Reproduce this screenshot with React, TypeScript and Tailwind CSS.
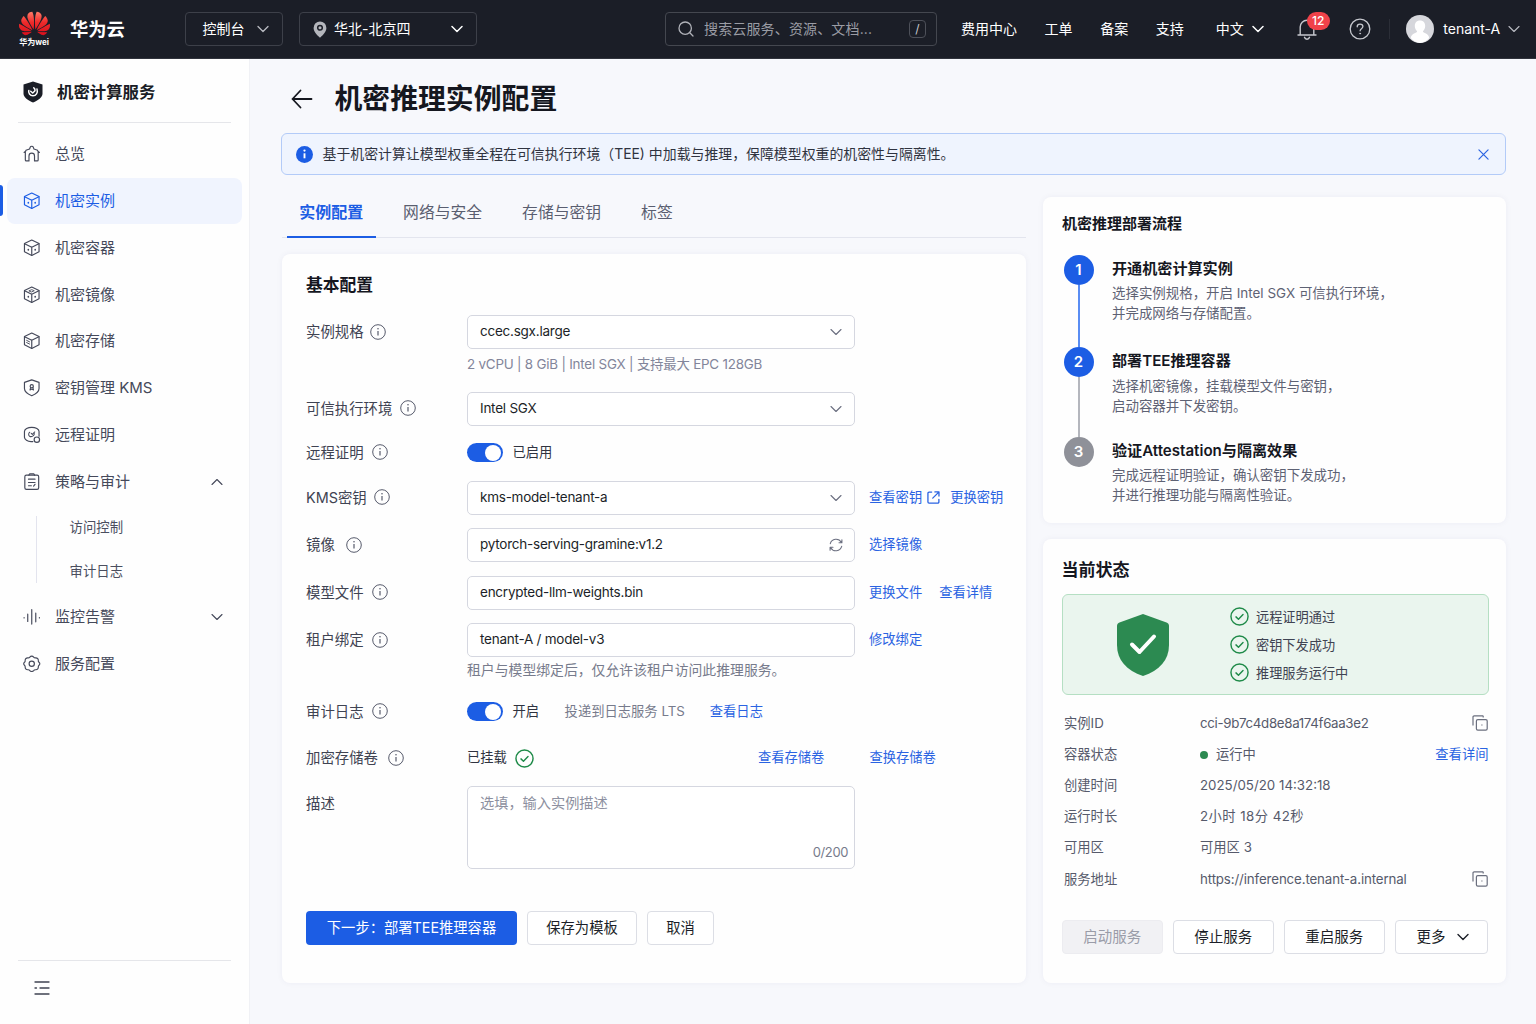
import type { ReactNode, SVGProps } from 'react'
import { SiHuawei } from 'react-icons/si'

type IconProps = SVGProps<SVGSVGElement>

function Icon({ children, ...props }: IconProps) {
  return (
    <svg
      viewBox="0 0 24 24"
      fill="none"
      stroke="currentColor"
      strokeWidth="1.6"
      strokeLinecap="round"
      strokeLinejoin="round"
      {...props}
    >
      {children}
    </svg>
  )
}

function Chevron({ up, className, strokeWidth = 1.3 }: { up?: boolean; className?: string; strokeWidth?: number }) {
  return (
    <svg
      viewBox="0 0 12 8"
      className={`w-3 h-2 shrink-0 ${className ?? ''}`}
      fill="none"
      stroke="currentColor"
      strokeWidth={strokeWidth}
      strokeLinecap="round"
      strokeLinejoin="round"
    >
      <path d={up ? 'M1 6.5 6 1.5l5 5' : 'M1 1.5l5 5 5-5'} />
    </svg>
  )
}

function HomeIcon(props: IconProps) {
  return (
    <Icon {...props}>
      <path d="M1.500 10.200 4 8V7.200l5-1.700.8-2.300a2.400 2.400 0 0 1 4.400 0l.8 2.300 5 1.700V8l2.500 2.200M3.200 9v11.400c0 .8.500 1.400 1.300 1.400h3.700v-6.800a3.800 3.800 0 0 1 7.600 0v6.800h3.700c.8 0 1.300-.6 1.300-1.400V9" />
    </Icon>
  )
}

function CubeIcon({ variant, ...props }: IconProps & { variant: 'dots' | 'top' | 'lines' }) {
  return (
    <Icon {...props}>
      <path d="M12 1.500 22 6.200v11.400L12 22.500 2 17.600V6.200z" />
      <path d="M2.200 6.400 12 11.200l9.800-4.800M12 11.200v11" />
      {variant !== 'lines' && <path d="M7.300 14.500v.6M16.700 14.500v.6" strokeWidth="2.200" />}
      {variant === 'top' && <path d="M8.500 6.500 12 5l3.500 1.500L12 8z" strokeWidth="1.200" />}
      {variant === 'lines' && <path d="M5 11.500l4 2M5 14.500l4 2" strokeWidth="1.300" />}
    </Icon>
  )
}

function KeyShieldIcon(props: IconProps) {
  return (
    <Icon {...props}>
      <path d="M12 1.200 22 4.600v8.400c0 4.600-4.500 7.600-10 10-5.500-2.400-10-5.400-10-10V4.600z" />
      <circle cx="12" cy="9.800" r="2.200" />
      <path d="M10.400 11.800 9.600 15l2.400-1.300 2.400 1.300-.8-3.200" strokeWidth="1.400" />
    </Icon>
  )
}

function AttestIcon(props: IconProps) {
  return (
    <Icon {...props}>
      <path d="M22 14V7.500C22 4.500 17.500 1.800 12 1.800S2 4.500 2 7.500v8c0 3 4.300 5.700 9 5.900h2.500" />
      <path d="M9.300 8.500c-2 1-2 4.300-.2 5.500 1.900 1.200 5.600.6 6.700-3.500M11.300 10l1.500 1.500 3.300-3.300" strokeWidth="1.400" />
      <circle cx="19" cy="18.800" r="3.700" />
    </Icon>
  )
}

function PolicyIcon(props: IconProps) {
  return (
    <Icon {...props}>
      <rect x="2.500" y="3" width="19" height="19.500" rx="2.200" />
      <path d="M8 3.200 9 1.300h6l1 1.900M7.500 8.500h9M7.500 13h9M7.500 17.500h4M14.500 18l2-2.500" />
    </Icon>
  )
}

function MonitorIcon(props: IconProps) {
  return (
    <Icon {...props}>
      <path d="M1.500 13v.6M6.500 8.500v10M12 2v20M17.500 7v12M22.500 13v.6" />
    </Icon>
  )
}

function GearIcon(props: IconProps) {
  return (
    <Icon {...props}>
      <path d="M9.400 2.800c1.400-1.700 3.800-1.700 5.200 0 .6.800 1.600 1.200 2.600 1.100 2.200-.3 3.900 1.400 3.800 3.500-.1 1 .2 1.900 1 2.600 1.400 1.200 1.400 2.900 0 4.100-.8.700-1.100 1.600-1 2.600.1 2.100-1.600 3.800-3.800 3.500-1-.1-2 .3-2.600 1.100-1.400 1.700-3.800 1.700-5.200 0-.6-.8-1.600-1.200-2.600-1.100-2.200.3-3.900-1.400-3.800-3.500.1-1-.2-1.900-1-2.600-1.400-1.200-1.400-2.900 0-4.100.8-.7 1.100-1.600 1-2.600C2.900 5.300 4.600 3.600 6.800 3.900c1 .1 2-.3 2.600-1.100z" />
      <circle cx="12" cy="12" r="3.600" />
    </Icon>
  )
}

function InfoIcon() {
  return (
    <svg viewBox="0 0 16 16" className="w-4 h-4 shrink-0 text-[#565a6b]" fill="none" stroke="currentColor" strokeWidth="1">
      <circle cx="8" cy="8" r="7.300" />
      <path d="M8 7v4.600" strokeWidth="1.200" />
      <circle cx="8" cy="4.700" r=".8" fill="currentColor" stroke="none" />
    </svg>
  )
}

function CheckCircle({ className }: { className?: string }) {
  return (
    <svg viewBox="0 0 20 20" className={`shrink-0 ${className ?? ''}`} fill="none" stroke="#1e8a48" strokeWidth="1.500" strokeLinecap="round" strokeLinejoin="round">
      <circle cx="10" cy="10" r="9" />
      <path d="m6.300 10.400 2.600 2.400 4.800-5" />
    </svg>
  )
}

function CopyIcon() {
  return (
    <svg viewBox="0 0 16 16" className="mr-px mb-px w-4 h-4" fill="none" stroke="#6b6f7e" strokeWidth="1.200" strokeLinejoin="round">
      <path d="M1 10.500V2a1.200 1.200 0 0 1 1.200-1.200h9M11.200.8v1.700" />
      <rect x="4.400" y="4.600" width="10.800" height="10.600" rx="1.400" />
      <path d="M9.300 10h1.200" />
    </svg>
  )
}

function Switch() {
  return (
    <div className="flex h-[19px] w-[35.500px] items-center justify-end rounded-full bg-[#1c5de4] p-[1.500px]">
      <div className="size-4 rounded-full bg-white" />
    </div>
  )
}

function Header() {
  return (
    <header className="flex h-[59px] shrink-0 items-center bg-[#1b1e27] text-sm text-white border-b border-[#30333c]">
      <div className="ml-[18px] flex w-8 flex-col items-center">
        <svg width="0" height="0" className="absolute">
          <defs>
            <linearGradient id="petal" x1="0" y1="0" x2="0" y2="1">
              <stop offset="0" stopColor="#ff7a66" />
              <stop offset=".45" stopColor="#ee2b2b" />
              <stop offset="1" stopColor="#d80f1c" />
            </linearGradient>
          </defs>
        </svg>
        <div className="flex h-[25px] items-center overflow-hidden">
          <SiHuawei className="size-[31px] shrink-0" fill="url(#petal)" />
        </div>
        <span className="pt-px text-[8px] font-bold leading-[10px] whitespace-nowrap">华为wei</span>
      </div>
      <span className="ml-5 w-[115px] pt-px text-[18.300px] font-semibold">华为云</span>
      <button className="flex h-[34px] w-[98px] items-center rounded border border-[#3d4049] pl-[16.500px]">
        控制台
        <Chevron className="ml-3 text-[#b9bbc2]" />
      </button>
      <button className="ml-4 flex h-[34px] w-[178px] items-center rounded border border-[#3d4049] pl-[13px] pr-[13.500px]">
        <svg viewBox="0 0 14 17" className="mr-[7px] h-[17px] w-3.5">
          <path d="M7 .5a6.400 6.400 0 0 1 6.400 6.400c0 3.600-3 6.600-6.400 9.800C3.600 13.500.6 10.500.6 6.900A6.400 6.400 0 0 1 7 .5z" fill="#b4b6bc" />
          <circle cx="7" cy="6.800" r="2.300" fill="#b4b6bc" stroke="#1b1e27" strokeWidth="1.500" />
        </svg>
        华北-北京四
        <Chevron className="ml-auto" strokeWidth={1.5} />
      </button>
      <div className="ml-[188px] flex h-[34px] w-[272px] items-center rounded border border-[#44474f] pl-3 pr-2.5 text-[#9a9ca4]">
        <svg viewBox="0 0 16 16" className="mr-[10px] size-4" fill="none" stroke="#b0b2b9" strokeWidth="1.300" strokeLinecap="round">
          <circle cx="7.200" cy="7.200" r="6.200" />
          <path d="m11.800 11.800 3.200 3.200" />
        </svg>
        <span className="tracking-[0.150px]">搜索云服务、资源、文档...</span>
        <span className="ml-auto flex h-[18px] w-[17px] items-center justify-center rounded border border-[#4d5059] text-xs text-[#c9cad0]">/</span>
      </div>
      <nav className="ml-6 flex gap-[27.600px]">
        <a>费用中心</a>
        <a>工单</a>
        <a>备案</a>
        <a>支持</a>
      </nav>
      <span className="ml-8">中文</span>
      <Chevron className="ml-2" strokeWidth={1.5} />
      <div className="relative ml-[33px]">
        <svg viewBox="0 0 20 22" className="h-[22px] w-5" fill="none" stroke="#c6c8ce" strokeWidth="1.400" strokeLinecap="round" strokeLinejoin="round">
          <path d="M1 17h18M3.200 16.500V9a6.800 6.800 0 0 1 13.600 0v7.500M7.500 19.300a2.600 2.600 0 0 0 5 0" />
        </svg>
        <span className="absolute -top-1.5 left-2.5 flex h-[18px] w-[23px] items-center justify-center rounded-full bg-[#f0424a] text-xs font-medium">12</span>
      </div>
      <svg viewBox="0 0 22 22" className="ml-8 size-[22px]" fill="none" stroke="#c6c8ce" strokeWidth="1.300" strokeLinecap="round">
        <circle cx="11" cy="11" r="9.800" />
        <path d="M8.200 8.800c0-3.600 5.700-3.400 5.700-.2 0 2.200-2.800 2-2.800 4.200" />
        <circle cx="11.100" cy="15.600" r=".5" fill="#c6c8ce" strokeWidth=".8" />
      </svg>
      <div className="ml-[18px] h-5 w-px bg-[#2b2e37]" />
      <svg viewBox="0 0 28 28" className="ml-4 size-7">
        <circle cx="14" cy="14" r="14" fill="#d6d7dc" />
        <path d="M14 5.500c3.200 0 5.200 2.200 5.200 5.400 0 2.200-1 4.200-2.300 5.300 0 2 6.100 2 6.300 6.800A14 14 0 0 1 14 28a14 14 0 0 1-9.200-5c.2-4.800 6.300-4.800 6.300-6.800-1.300-1.100-2.300-3.100-2.300-5.300 0-3.200 2-5.400 5.200-5.400z" fill="#fff" />
      </svg>
      <span className="ml-[9.500px]">tenant-A</span>
      <Chevron className="ml-[7.500px] text-[#b9bbc2]" strokeWidth={1.1} />
    </header>
  )
}

function NavItem({ icon, label, active, chevron }: { icon: ReactNode; label: string; active?: boolean; chevron?: 'up' | 'down' }) {
  return (
    <div className="relative h-[46.800px]">
      {active && <span className="absolute left-0 top-[7px] h-[31px] w-[3px] rounded-r-sm bg-[#1c5de4]" />}
      <div className={`ml-[7px] mr-[7px] flex h-[46px] items-center rounded-lg pl-4 pr-[19px] ${active ? 'bg-[#f0f4fe] text-[#1c5de4]' : 'text-[#45495a]'}`}>
        {icon}
        <span className="ml-[14.500px] pt-px">{label}</span>
        {chevron && <Chevron up={chevron === 'up'} className="ml-auto" strokeWidth={1.1} />}
      </div>
    </div>
  )
}

function Sidebar() {
  const ic = 'size-[17.500px] shrink-0'
  return (
    <aside className="flex w-[250px] shrink-0 flex-col border-r border-[#f0f1f5] bg-[#fefefe] text-[15px]">
      <div className="mx-[18px] flex h-16 items-center border-b border-[#e5e6ea] pl-[5px] pt-0.5">
        <svg viewBox="0 0 20 22" className="h-[22px] w-5">
          <path d="M10 .5 19.500 3.500v9c0 4-4.500 7-9.500 9-5-2-9.500-5-9.500-9v-9z" fill="#1a1d26" />
          <path d="M5.800 9.500c-.8 2.200 1.200 5.300 4.200 5.300 2.900 0 5.200-2.700 4-6.800M10.800 6.800a3 3 0 0 1 1.200 2.900L9.700 12 7.700 10.200" fill="none" stroke="#fff" strokeWidth="1.500" strokeLinecap="round" strokeLinejoin="round" />
        </svg>
        <span className="ml-3.5 pt-px text-[16.400px] font-semibold text-[#1a1d26]">机密计算服务</span>
      </div>
      <nav className="mt-2 flex-1">
        <NavItem icon={<HomeIcon className={ic} />} label="总览" />
        <NavItem icon={<CubeIcon variant="dots" className={ic} />} label="机密实例" active />
        <NavItem icon={<CubeIcon variant="dots" className={ic} />} label="机密容器" />
        <NavItem icon={<CubeIcon variant="top" className={ic} />} label="机密镜像" />
        <NavItem icon={<CubeIcon variant="lines" className={ic} />} label="机密存储" />
        <NavItem icon={<KeyShieldIcon className={ic} />} label="密钥管理 KMS" />
        <NavItem icon={<AttestIcon className={ic} />} label="远程证明" />
        <NavItem icon={<PolicyIcon className={ic} />} label="策略与审计" chevron="up" />
        <div className="ml-9 flex h-[88.500px] items-center">
          <div className="h-[67px] w-px bg-[#e3e4ee]" />
          <div className="-mt-px ml-[32.500px] text-[13.400px] leading-[44.500px] text-[#4b4f5f]">
            <div>访问控制</div>
            <div>审计日志</div>
          </div>
        </div>
        <NavItem icon={<MonitorIcon className={ic} />} label="监控告警" chevron="down" />
        <NavItem icon={<GearIcon className={ic} />} label="服务配置" />
      </nav>
      <div className="mx-[18px] flex h-16 border-t border-[#e5e6ea] pl-4 pt-[19px]">
        <svg viewBox="0 0 16 16" className="size-4" fill="none" stroke="#3f4352" strokeWidth="1.300" strokeLinecap="round">
          <path d="M1 2h14M6 8h9M1 14h14M1 8h1.500" />
        </svg>
      </div>
    </aside>
  )
}

function Link({ children, className }: { children: ReactNode; className?: string }) {
  return <a className={`whitespace-nowrap text-[13.300px] text-[#2a63e2] ${className ?? ''}`}>{children}</a>
}

function Row({ label, info = true, gap = 'ml-2', className, children }: { label: string; info?: boolean; gap?: string; className: string; children: ReactNode }) {
  return (
    <div className={`flex items-center ${className}`}>
      <div className="flex w-[161px] shrink-0 items-center text-[14.400px] text-[#3f4352]">
        {label}
        {info && <span className={gap}><InfoIcon /></span>}
      </div>
      {children}
    </div>
  )
}

function Field({ value, icon }: { value: string; icon?: ReactNode }) {
  return (
    <div className="flex h-[34px] w-[388px] shrink-0 items-center justify-between rounded-[5px] border border-[#d5d7e0] bg-white pl-3 pr-3 text-[13.500px] tracking-[-0.240px] text-[#1c1f28]">
      <span className="pb-px">{value}</span>
      {icon}
    </div>
  )
}

function ConfigForm() {
  const down = <Chevron className="text-[#6b6f80]" strokeWidth={1.1} />
  return (
    <section className="flex-1 rounded-lg bg-[#fefefe] pl-[24.500px] shadow-[0_0_6px_rgba(30,40,90,0.05)]">
      <h2 className="flex h-[61px] items-center pt-0.5 text-[16.800px] font-semibold text-[#15171f]">基本配置</h2>
      <Row label="实例规格" gap="ml-1.5" className="h-[34px]">
        <Field value="ccec.sgx.large" icon={down} />
      </Row>
      <p className="ml-[161px] flex h-[42.500px] items-center pb-[11.500px] text-[13.400px] tracking-[-0.210px] text-[#82859a]">2 vCPU | 8 GiB | Intel SGX | 支持最大 EPC 128GB</p>
      <Row label="可信执行环境" gap="ml-2" className="h-[34px]">
        <Field value="Intel SGX" icon={down} />
      </Row>
      <Row label="远程证明" gap="ml-2" className="h-[54px]">
        <Switch />
        <span className="ml-2.5 pt-px text-[13.300px] text-[#2f3340]">已启用</span>
      </Row>
      <Row label="KMS密钥" gap="ml-[7.500px]" className="mt-px h-[34px]">
        <Field value="kms-model-tenant-a" icon={down} />
        <Link className="ml-3.5">查看密钥</Link>
        <svg viewBox="0 0 14 14" className="ml-[5px] size-[13px]" fill="none" stroke="#2a63e2" strokeWidth="1.400" strokeLinecap="round" strokeLinejoin="round">
          <path d="M5 1.200H2.200a1.200 1.200 0 0 0-1.200 1.200v9.400A1.200 1.200 0 0 0 2.200 13h9.400a1.200 1.200 0 0 0 1.200-1.200V9M8.500 1h4.400v4.400M12.700 1.200 6.200 7.700" />
        </svg>
        <Link className="ml-2.5">更换密钥</Link>
      </Row>
      <Row label="镜像" gap="ml-[11px]" className="mt-[13.500px] h-[34px]">
        <Field
          value="pytorch-serving-gramine:v1.2"
          icon={
            <svg viewBox="0 0 14 14" className="-mr-px size-3.5" fill="none" stroke="#6b6f80" strokeWidth="1.100" strokeLinecap="round" strokeLinejoin="round">
              <path d="M1.300 5.600A6 6 0 0 1 12.300 4.300M12.900 1.800v2.900H10M12.700 8.400A6 6 0 0 1 1.700 9.700M1.100 12.200V9.300H4" />
            </svg>
          }
        />
        <Link className="ml-3.5">选择镜像</Link>
      </Row>
      <Row label="模型文件" gap="ml-2" className="mt-[13.500px] h-[34px]">
        <Field value="encrypted-llm-weights.bin" />
        <Link className="ml-3.5">更换文件</Link>
        <Link className="ml-[17px]">查看详情</Link>
      </Row>
      <Row label="租户绑定" gap="ml-2" className="mt-[13.500px] h-[34px]">
        <Field value="tenant-A / model-v3" />
        <Link className="ml-3.5">修改绑定</Link>
      </Row>
      <p className="ml-[161px] flex h-[26px] items-center text-[13.850px] text-[#777b8c]">租户与模型绑定后，仅允许该租户访问此推理服务。</p>
      <Row label="审计日志" gap="ml-2" className="h-[57px]">
        <Switch />
        <span className="ml-2.5 pt-px text-[13.300px] text-[#2f3340]">开启</span>
        <span className="ml-[25.500px] pt-px text-[13.300px] text-[#777b8c]">投递到日志服务 LTS</span>
        <Link className="ml-[25px] pt-px">查看日志</Link>
      </Row>
      <Row label="加密存储卷" gap="ml-2.5" className="h-[36px]">
        <span className="text-[13.300px] text-[#2f3340]">已挂载</span>
        <CheckCircle className="ml-2 size-[19px]" />
        <Link className="ml-[224px]">查看存储卷</Link>
        <Link className="ml-[45px]">查换存储卷</Link>
      </Row>
      <div className="mt-2.5 flex">
        <span className="w-[161px] pt-[7px] text-[14.400px] text-[#3f4352]">描述</span>
        <div className="flex h-[83px] w-[388px] flex-col justify-between rounded-[5px] border border-[#d5d7e0] bg-white pb-1.5 pl-3 pr-1.5 pt-1.5 text-sm">
          <span className="text-[14.200px] text-[#8d90a0]">选填，输入实例描述</span>
          <span className="self-end text-[13px] tracking-[-0.400px] text-[#777b8c]">0/200</span>
        </div>
      </div>
      <div className="mt-[41.500px] flex gap-2.5 text-[14.300px]">
        <button className="h-[34px] w-[211px] rounded bg-[#1c5de4] text-white">下一步：部署TEE推理容器</button>
        <button className="h-[34px] w-[110px] rounded border border-[#dcdee5] bg-white text-[#1c1f28]">保存为模板</button>
        <button className="h-[34px] w-[67px] rounded border border-[#dcdee5] bg-white text-[#1c1f28]">取消</button>
      </div>
    </section>
  )
}

const steps = [
  { title: '开通机密计算实例', lines: ['选择实例规格，开启 Intel SGX 可信执行环境，', '并完成网络与存储配置。'], height: 'h-[92.500px]', dot: 'bg-[#1c5de4]', line: 'bg-[#5a8df3]' },
  { title: '部署TEE推理容器', lines: ['选择机密镜像，挂载模型文件与密钥，', '启动容器并下发密钥。'], height: 'h-[89.500px]', dot: 'bg-[#1c5de4]', line: 'bg-[#b4b6bd]' },
  { title: '验证Attestation与隔离效果', lines: ['完成远程证明验证，确认密钥下发成功，', '并进行推理功能与隔离性验证。'], height: 'h-[68px]', dot: 'bg-[#8f9199]', line: '' },
]

function ProcessCard() {
  return (
    <section className="h-[326px] rounded-lg bg-[#fefefe] pl-[19.500px] shadow-[0_0_6px_rgba(30,40,90,0.05)]">
      <h2 className="flex h-[57.500px] items-center pb-1 text-[15px] font-semibold text-[#15171f]">机密推理部署流程</h2>
      {steps.map((step, i) => (
        <div key={step.title} className={`flex pl-[1.500px] ${step.height}`}>
          <div className="flex w-[30px] flex-col items-center">
            <span className={`flex size-[30px] shrink-0 items-center justify-center rounded-full pt-px text-[15px] font-semibold text-white ${step.dot}`}>{i + 1}</span>
            {step.line && <span className={`w-0.5 flex-1 ${step.line}`} />}
          </div>
          <div className="ml-[18.500px]">
            <h3 className="mb-px text-[15.100px] font-semibold leading-[27.500px] text-[#15171f]">{step.title}</h3>
            {step.lines.map((line) => (
              <p key={line} className="text-[13.450px] leading-5 text-[#5e6274]">{line}</p>
            ))}
          </div>
        </div>
      ))}
    </section>
  )
}

const details = [
  { label: '实例ID', value: 'cci-9b7c4d8e8a174f6aa3e2', tracking: 'tracking-[-0.320px]', end: <CopyIcon /> },
  { label: '容器状态', value: '运行中', dot: true, end: <Link>查看详间</Link> },
  { label: '创建时间', value: '2025/05/20 14:32:18' },
  { label: '运行时长', value: '2小时 18分 42秒', tracking: 'tracking-[0.450px]' },
  { label: '可用区', value: '可用区 3' },
  { label: '服务地址', value: 'https://inference.tenant-a.internal', tracking: 'tracking-[-0.130px]', end: <CopyIcon /> },
]

function StatusCard() {
  return (
    <section className="flex-1 rounded-lg bg-[#fefefe] pl-[19px] pr-[17px] shadow-[0_0_6px_rgba(30,40,90,0.05)]">
      <h2 className="flex h-[55px] items-center pt-2 text-[17px] font-semibold text-[#15171f]">当前状态</h2>
      <div className="flex h-[101px] items-center rounded-md border border-[#b5dfc3] bg-[#eaf5ee] pl-[53px]">
        <svg viewBox="0 0 54 62" className="h-[62px] w-[54px]">
          <path d="M27 0 50.500 8.600C52 9.200 53 10.300 53 12v19c0 15-9.500 25.500-26 31C10.500 56.500 1 46 1 31V12c0-1.700 1-2.800 2.500-3.400z" fill="#2c8a51" />
          <path d="m16 30.500 7.500 7.500L38 22.500" fill="none" stroke="#fff" strokeWidth="4" strokeLinecap="round" strokeLinejoin="round" />
        </svg>
        <ul className="ml-[60px] text-[13.200px] leading-7 text-[#3f4352]">
          {['远程证明通过', '密钥下发成功', '推理服务运行中'].map((t) => (
            <li key={t} className="flex items-center">
              <CheckCircle className="mr-[7.500px] size-[19px]" />
              {t}
            </li>
          ))}
        </ul>
      </div>
      <dl className="mt-[13px] text-[13.300px] text-[#565a6b]">
        {details.map((d) => (
          <div key={d.label} className="flex h-[31.200px] items-center pl-[2.500px]">
            <dt className="w-[136px]">{d.label}</dt>
            <dd className={`flex items-center ${d.tracking ?? ''}`}>
              {d.dot && <span className="mr-2 size-2 rounded-full bg-[#2c8a51]" />}
              {d.value}
            </dd>
            {d.end && <dd className="ml-auto">{d.end}</dd>}
          </div>
        ))}
      </dl>
      <div className="mt-[25px] flex gap-[9.500px] text-[14.500px] text-[#1c1f28]">
        <button className="h-[34px] w-[101.500px] rounded border border-[#ececf0] bg-[#f1f1f4] text-[#9a9ca8]">启动服务</button>
        <button className="h-[34px] w-[101.500px] rounded border border-[#dcdee5] bg-white">停止服务</button>
        <button className="h-[34px] w-[101.500px] rounded border border-[#dcdee5] bg-white">重启服务</button>
        <button className="flex h-[34px] w-[93px] items-center justify-center gap-[11px] rounded border border-[#dcdee5] bg-white pl-[3px]">
          更多
          <Chevron strokeWidth={1.4} />
        </button>
      </div>
    </section>
  )
}

export default function App() {
  return (
    <div className="flex h-[1024px] w-[1536px] flex-col overflow-hidden bg-[#f7f8fc] font-['Inter','Noto_Sans_CJK_SC',sans-serif]">
      <Header />
      <div className="flex flex-1">
        <Sidebar />
        <main className="flex flex-1 flex-col pl-[31.500px] pr-[30.500px]">
          <div className="flex h-[74px] items-center pt-[7px]">
            <svg viewBox="0 0 22 20" className="mb-0.5 ml-[9.500px] h-5 w-[22px]" fill="none" stroke="#15171f" strokeWidth="1.800" strokeLinecap="round" strokeLinejoin="round">
              <path d="M20.500 10H1.500M9.500 1.500 1.500 10l8 8.500" />
            </svg>
            <h1 className="ml-[21.500px] text-[27.850px] font-semibold text-[#15171f]">机密推理实例配置</h1>
          </div>
          <div className="-ml-px flex h-[42px] items-center rounded-md border border-[#b3cbf8] bg-[#eff4fe] pl-3.5 pr-4 text-[13.900px] text-[#2f3340]">
            <svg viewBox="0 0 17 17" className="mr-2.5 size-[17px]">
              <circle cx="8.500" cy="8.500" r="8.500" fill="#1c5de4" />
              <path d="M8.500 7.300v5" stroke="#fff" strokeWidth="1.900" />
              <circle cx="8.500" cy="4.600" r="1.150" fill="#fff" />
            </svg>
            基于机密计算让模型权重全程在可信执行环境（TEE) 中加载与推理，保障模型权重的机密性与隔离性。
            <svg viewBox="0 0 12 12" className="ml-auto size-[11px]" stroke="#2a63e2" strokeWidth="1.300" strokeLinecap="round">
              <path d="M1 1l10 10M11 1 1 11" />
            </svg>
          </div>
          <div className="flex h-[808px] gap-[17px]">
            <div className="flex w-[744px] flex-col">
              <div className="mb-4 flex h-[63px] shrink-0 items-stretch border-b border-[#e3e5ee] pl-[5.500px] text-[15.800px] text-[#5a5e70]">
                <span className="-mb-px flex items-center border-b-[2.500px] border-[#1c5de4] px-[12.300px] pt-[13px] text-base font-semibold text-[#1c5de4]">实例配置</span>
                <span className="ml-[27.500px] flex items-center pt-[13px]">网络与安全</span>
                <span className="ml-10 flex items-center pt-[13px]">存储与密钥</span>
                <span className="ml-10 flex items-center pt-[13px]">标签</span>
              </div>
              <ConfigForm />
            </div>
            <div className="flex flex-1 flex-col gap-4 pt-[22px]">
              <ProcessCard />
              <StatusCard />
            </div>
          </div>
        </main>
      </div>
    </div>
  )
}
